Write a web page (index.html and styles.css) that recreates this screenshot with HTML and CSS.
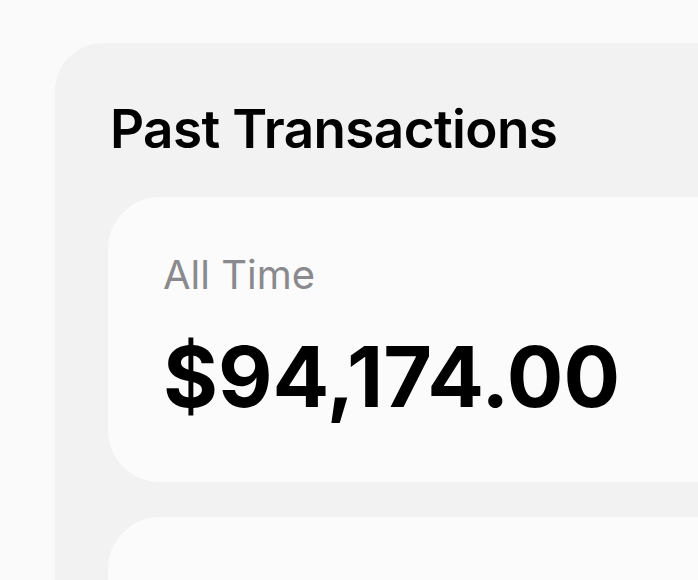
FILE: index.html
```html
<!DOCTYPE html>
<html>
<head>
<meta charset="utf-8">
<link rel="stylesheet" href="styles.css">
</head>
<body>
<div class="page">
  <section class="panel">
    <h1 class="panel-title">Past Transactions</h1>
    <div class="stat-card">
      <div class="stat-label">All Time</div>
      <div class="stat-value">$94,174.00</div>
    </div>
    <div class="stat-card stat-card--next"></div>
  </section>
</div>
</body>
</html>
```
FILE: styles.css
```css
html, body {
  margin: 0;
  padding: 0;
}
body {
  background: #fafafa;
  font-family: Inter, "Noto Sans", sans-serif;
  width: 698px;
  height: 580px;
  overflow: hidden;
}
.page {
  padding: 43px 0 0 55px;
  height: 580px;
  box-sizing: border-box;
}
.panel {
  height: 100%;
  display: flex;
  flex-direction: column;
  background: #f2f2f2;
  border-radius: 48px 0 0 0;
  padding: 54px 0 0 53px;
  box-sizing: border-box;
}
.panel-title {
  margin: 0 0 0 2px;
  font-size: 53px;
  font-weight: 600;
  line-height: 64px;
  color: #000;
  letter-spacing: -0.6px;
}
.stat-card {
  margin-top: 36px;
  background: #fbfbfb;
  border-radius: 52px 0 0 52px;
  height: 285px;
  flex: none;
  padding: 54px 0 0 55px;
  box-sizing: border-box;
}
.stat-card--next {
  margin-top: 35px;
  flex: 1;
  height: auto;
  border-radius: 52px 0 0 0;
}
.stat-label {
  font-size: 40px;
  line-height: 48px;
  color: #8a8a8e;
  font-weight: 400;
}
.stat-value {
  margin-top: 28px;
  font-size: 84px;
  line-height: 100px;
  font-weight: 700;
  color: #000;
}
```
